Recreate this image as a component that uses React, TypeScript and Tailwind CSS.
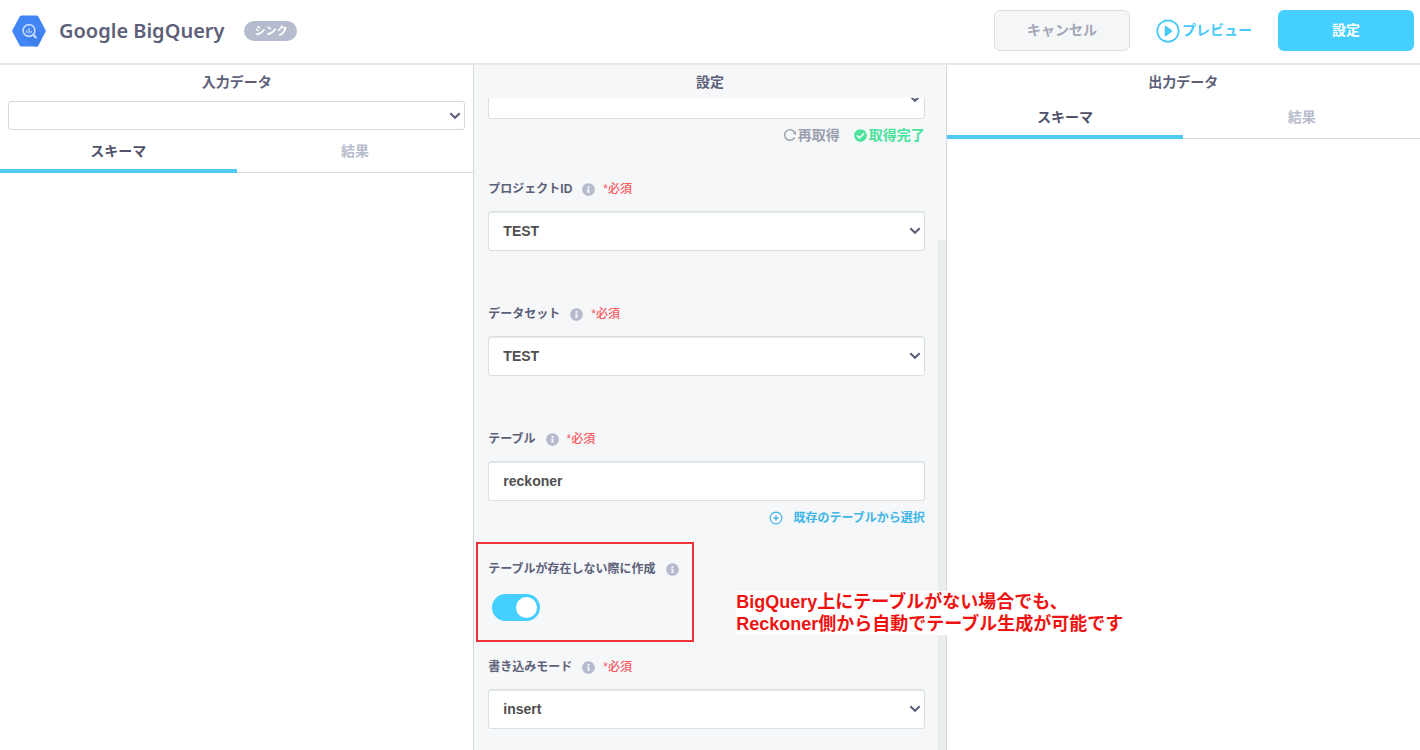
import { useState, type ReactNode } from "react";
import { FaCheckCircle, FaInfoCircle } from "react-icons/fa";

function BigQueryLogo() {
  return (
    <svg width="36" height="34" viewBox="0 0 36 34" className="shrink-0" aria-hidden="true">
      <path
        d="M10.6 1.5h14.8c.8 0 1.500.4 1.900 1.100l7.200 13.300c.4.700.4 1.500 0 2.200l-7.200 13.300c-.4.700-1.100 1.100-1.900 1.100H10.600c-.8 0-1.500-.4-1.900-1.100L1.500 18.100c-.4-.7-.4-1.500 0-2.200L8.700 2.600c.4-.7 1.100-1.100 1.900-1.100z"
        fill="#4285f4"
      />
      <path d="M23.500 12l8 10.500-4.200 8.900c-.4.700-1.100 1.100-1.900 1.100h-1.800l-9.600-10.100z" fill="#3f7fe9" />
      <circle cx="18" cy="16.500" r="5.900" fill="#4285f4" stroke="#c3d8fa" strokeWidth="1.700" />
      <path d="M15.800 16.500v2.200M18 14v5.500M20.200 17v1.700" stroke="#c3d8fa" strokeWidth="1.300" fill="none" />
      <path d="M22.300 20.900l2.500 2.500" stroke="#c3d8fa" strokeWidth="2.200" strokeLinecap="round" />
    </svg>
  );
}

function PlayIcon() {
  return (
    <svg width="24" height="24" viewBox="0 0 24 24" aria-hidden="true">
      <circle cx="12" cy="12" r="10.700" fill="none" stroke="currentColor" strokeWidth="1.700" />
      <path d="M8.700 7.300v9.400c0 .6.600.9 1.100.5l6.400-4.600c.4-.3.400-.9 0-1.200L9.800 6.800c-.5-.4-1.100-.1-1.100.5z" fill="currentColor" />
    </svg>
  );
}

function ReloadIcon() {
  return (
    <svg width="14" height="14" viewBox="0 0 14 14" fill="none" aria-hidden="true">
      <path d="M11.700 9.400A5.300 5.300 0 1 1 11.500 4.200" stroke="currentColor" strokeWidth="1.400" />
      <path d="M13 3.200v3.700l-3.200-1.600z" fill="currentColor" />
    </svg>
  );
}

function PlusCircleIcon() {
  return (
    <svg width="14" height="14" viewBox="0 0 14 14" fill="none" stroke="currentColor" aria-hidden="true">
      <circle cx="7" cy="7" r="5.900" strokeWidth="1.100" />
      <path d="M7 4.600v4.800M4.600 7h4.800" strokeWidth="1.300" />
    </svg>
  );
}

function Select({ id, label, options, compact = false }: { id?: string; label?: string; options: string[]; compact?: boolean }) {
  return (
    <div className="relative">
      <select
        id={id}
        aria-label={label}
        className={
          compact
            ? "block h-[29px] w-full appearance-none rounded-[3px] border border-[#d5dadd] bg-white px-4 text-sm"
            : "block h-10 w-full appearance-none rounded-[3px] border border-[#d9dfe2] bg-white px-3.5 text-sm font-bold text-[#4f4f4f] shadow-[inset_0_1px_1px_#e4e9eb]"
        }
      >
        {options.map((option) => (
          <option key={option}>{option}</option>
        ))}
      </select>
      <svg
        width="12"
        height="8"
        viewBox="0 0 12 8"
        className="pointer-events-none absolute top-1/2 right-1 -mt-1"
        fill="none"
        stroke="#5d6078"
        strokeWidth="2.200"
        aria-hidden="true"
      >
        <path d="M1.300 1.300L6 5.700l4.700-4.400" />
      </svg>
    </div>
  );
}

function FieldLabel({ htmlFor, required = false, children }: { htmlFor: string; required?: boolean; children: ReactNode }) {
  return (
    <div className="flex h-5 items-center text-xs">
      <label htmlFor={htmlFor} className="font-bold text-[#5d6078]">
        {children}
      </label>
      <FaInfoCircle className="ml-2.5 size-[13px] text-[#b5bbcd]" aria-hidden="true" />
      {required && <span className="ml-2 font-medium text-[#f8595c]">*必須</span>}
    </div>
  );
}

function PanelTitle({ children }: { children: ReactNode }) {
  return <h2 className="flex h-[33px] items-center justify-center text-sm font-bold text-[#5d6078]">{children}</h2>;
}

function Tabs({ name }: { name: string }) {
  const [active, setActive] = useState(0);
  return (
    <div role="tablist" aria-label={name} className="grid grid-cols-2">
      {["スキーマ", "結果"].map((tab, index) => (
        <button
          key={tab}
          type="button"
          role="tab"
          aria-selected={active === index}
          onClick={() => setActive(index)}
          className={
            active === index
              ? "h-[41px] border-b-4 border-[#4fcaf3] text-sm font-bold text-[#4f5268]"
              : "h-[41px] border-b border-[#d5dadd] pb-[3px] text-sm font-bold text-[#b9bdce]"
          }
        >
          {tab}
        </button>
      ))}
    </div>
  );
}

export default function App() {
  const [createTable, setCreateTable] = useState(true);
  const [table, setTable] = useState("reckoner");

  return (
    <div className="flex min-h-screen flex-col bg-white font-['Liberation_Sans','Noto_Sans_CJK_JP',sans-serif]">
      <header className="flex h-[65px] items-center border-b-2 border-[#e6e8ea] pr-1.5 pb-0.5 pl-[11px]">
        <BigQueryLogo />
        <h1 className="ml-3 font-['Noto_Sans',sans-serif] text-xl font-semibold text-[#5d6078]">Google BigQuery</h1>
        <span className="ml-5 flex h-5 items-center rounded-full bg-[#b5bccd] px-2.5 pt-px text-[11px] font-bold text-white">シンク</span>
        <div className="ml-auto flex items-center gap-[26px]">
          <button
            type="button"
            className="h-[41px] w-[136px] rounded-md border border-[#dbdfe2] bg-[#f4f6f8] pb-0.5 text-sm font-bold text-[#a3a6b7]"
          >
            キャンセル
          </button>
          <button type="button" className="flex items-center gap-0.5 text-sm font-bold text-[#47c9f8]">
            <PlayIcon />
            <span className="pb-0.5">プレビュー</span>
          </button>
          <button type="button" className="h-[41px] w-[136px] rounded-md bg-[#45cfff] pb-0.5 text-sm font-bold text-white">
            設定
          </button>
        </div>
      </header>

      <main className="grid flex-1 grid-cols-3">
        <section>
          <PanelTitle>入力データ</PanelTitle>
          <div className="mx-2 mt-[3px] mb-0.5">
            <Select compact label="入力データ" options={[""]} />
          </div>
          <Tabs name="入力データ" />
        </section>

        <section className="flex flex-col border-x border-[#d5dadd] bg-[#f5f7f9]">
          <PanelTitle>設定</PanelTitle>
          <div className="flex flex-1">
            <form className="min-w-0 flex-1 pr-[13px] pb-5 pl-3.5">
              <div className="flex h-[21px] flex-col justify-end overflow-hidden">
                <Select label="認証情報" options={[""]} />
              </div>
              <div className="flex h-8 items-center justify-end gap-3.5 text-sm font-bold">
                <button type="button" className="flex items-center gap-px text-[#9b9fae]">
                  <ReloadIcon />
                  再取得
                </button>
                <span className="flex items-center gap-0.5 text-[#4be29c]">
                  <FaCheckCircle className="size-[13px]" aria-hidden="true" />
                  取得完了
                </span>
              </div>

              <div className="mt-7 flex flex-col gap-[53px]">
                <div className="flex flex-col gap-3">
                  <FieldLabel htmlFor="project" required>
                    プロジェクトID
                  </FieldLabel>
                  <Select id="project" options={["TEST"]} />
                </div>
                <div className="flex flex-col gap-3">
                  <FieldLabel htmlFor="dataset" required>
                    データセット
                  </FieldLabel>
                  <Select id="dataset" options={["TEST"]} />
                </div>
                <div className="flex flex-col gap-3">
                  <FieldLabel htmlFor="table" required>
                    テーブル
                  </FieldLabel>
                  <input
                    id="table"
                    type="text"
                    value={table}
                    onChange={(event) => setTable(event.target.value)}
                    className="h-10 w-full rounded-[3px] border border-[#d9dfe2] bg-white px-3.5 text-sm font-bold text-[#4f4f4f] shadow-[inset_0_1px_1px_#e4e9eb]"
                  />
                </div>
              </div>

              <button type="button" className="mt-[7px] ml-auto flex h-5 items-center gap-2.5 text-xs font-bold text-[#41b5e6]">
                <PlusCircleIcon />
                既存のテーブルから選択
              </button>

              <div className="relative mt-[31px]">
                <FieldLabel htmlFor="create-table">テーブルが存在しない際に作成</FieldLabel>
                <input
                  id="create-table"
                  type="checkbox"
                  role="switch"
                  checked={createTable}
                  onChange={(event) => setCreateTable(event.target.checked)}
                  className="mt-[15px] ml-1 flex h-[27px] w-12 appearance-none items-center rounded-full bg-[#c4cad4] p-[3px] before:size-[21px] before:rounded-full before:bg-white checked:justify-end checked:bg-[#45cfff]"
                />
                <div className="pointer-events-none absolute -top-[17px] -left-3 h-[100px] w-[218px] border-2 border-[#ee3338]" />
                <p className="absolute top-8 left-[248px] z-10 bg-white text-lg leading-[22px] font-bold whitespace-nowrap text-[#ee1310]">
                  BigQuery上にテーブルがない場合でも、
                  <br />
                  Reckoner側から自動でテーブル生成が可能です
                </p>
              </div>

              <div className="mt-9 flex flex-col gap-3">
                <FieldLabel htmlFor="mode" required>
                  書き込みモード
                </FieldLabel>
                <Select id="mode" options={["insert"]} />
              </div>
            </form>
            <div className="w-2 pt-[142px]" aria-hidden="true">
              <div className="h-full bg-[#eaeeef]" />
            </div>
          </div>
        </section>

        <section>
          <PanelTitle>出力データ</PanelTitle>
          <Tabs name="出力データ" />
        </section>
      </main>
    </div>
  );
}
